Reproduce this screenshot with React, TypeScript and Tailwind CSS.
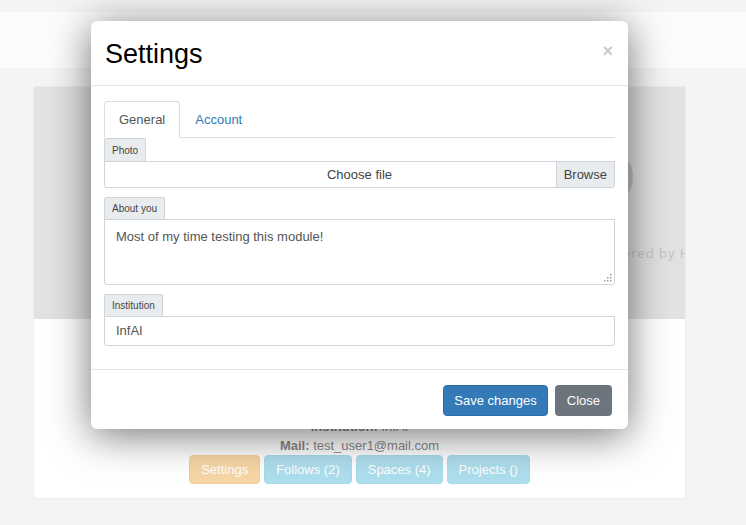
import React from "react";

export default function App() {
  const font = { fontFamily: '"Liberation Sans", Arial, sans-serif' };
  return (
    <div className="relative w-[746px] h-[525px] overflow-hidden bg-[#f4f4f4]" style={font}>
      {/* top bar */}
      <div className="mt-[12px] h-[56px] bg-[#fbfcfc]" />
      {/* card */}
      <div className="ml-[33px] mt-[18px] w-[653px] h-[413px] border border-[#ececec] bg-white flex flex-col overflow-hidden">
        <div className="h-[232px] bg-[#e2e2e2] flex flex-col whitespace-nowrap overflow-hidden">
          <div className="ml-[573px] mt-[66px] text-[50px] leading-[50px] text-[#c2c2c2]">0</div>
          <div
            className="ml-[560px] mt-[41px] text-[13px] tracking-[1px] text-[#c2c2c2]"
            style={{ fontFamily: '"Open Sans", sans-serif' }}
          >
            Powered by HTML5 UP
          </div>
        </div>
        <div className="flex-1 flex flex-col items-center pt-[98px] text-[13px] text-[#888]">
          <div className="leading-[19px]">
            <b>Institution:</b> InfAI
          </div>
          <div className="leading-[19px]">
            <b>Mail:</b> test_user1@mail.com
          </div>
          <div className="flex gap-[4px]">
            <span className="h-[29px] px-[11px] flex items-center rounded-[4px] bg-[#f6d6a6] border border-[#f3cf9a] text-white">Settings</span>
            <span className="h-[29px] px-[11px] flex items-center rounded-[4px] bg-[#addeed] border border-[#a6dbec] text-white">Follows (2)</span>
            <span className="h-[29px] px-[11px] flex items-center rounded-[4px] bg-[#addeed] border border-[#a6dbec] text-white">Spaces (4)</span>
            <span className="h-[29px] px-[11px] flex items-center rounded-[4px] bg-[#addeed] border border-[#a6dbec] text-white">Projects ()</span>
          </div>
        </div>
      </div>

      {/* modal */}
      <div className="absolute left-[91px] top-[21px] w-[537px] h-[408px] bg-white rounded-[6px] shadow-[0_6px_40px_rgba(0,0,0,0.55)] flex flex-col">
        <div className="h-[65px] border-b border-[#e5e5e5] flex items-center justify-between pl-[14px] pr-[15px]">
          <h2 className="text-[27px] text-black leading-none mt-[2px]">Settings</h2>
          <span className="text-[18px] font-bold text-[#c8cbce] leading-none mt-[-4px]">×</span>
        </div>
        <div className="px-[13px] pt-[15px] flex flex-col">
          {/* tabs */}
          <div className="flex border-b border-[#dddddd] h-[37px]">
            <div className="h-[37px] px-[14px] flex items-center border border-[#dddddd] border-b-white rounded-t-[4px] bg-white text-[13px] text-[#555]">
              General
            </div>
            <div className="h-[37px] px-[15px] flex items-center text-[13px] text-[#337ab7]">Account</div>
          </div>
          {/* Photo */}
          <div className="flex">
            <span className="h-[23px] px-[7px] flex items-center bg-[#e9ecef] border border-[#ced4da] border-b-0 rounded-t-[2px] text-[10px] text-[#444]">Photo</span>
          </div>
          <div className="relative h-[27px] border border-[#ced4da] rounded-b-[3px] flex items-center justify-center text-[13px] text-[#444]">
            Choose file
            <span className="absolute right-0 top-0 h-full px-[7px] flex items-center bg-[#e9ecef] border-l border-[#ced4da] rounded-br-[3px]">Browse</span>
          </div>
          {/* About */}
          <div className="flex mt-[9px]">
            <span className="h-[22px] px-[7px] flex items-center bg-[#e9ecef] border border-[#ced4da] border-b-0 rounded-t-[2px] text-[10px] text-[#444]">About you</span>
          </div>
          <div className="relative h-[66px] border border-[#ced4da] rounded-b-[3px] px-[11px] pt-[7px] text-[13px] text-[#555]">
            Most of my time testing this module!
            <svg className="absolute right-[2px] bottom-[2px]" width="8" height="8" viewBox="0 0 8 8">
              <rect x="6" y="0" width="1.5" height="1.5" fill="#999" />
              <rect x="3" y="3" width="1.5" height="1.5" fill="#999" />
              <rect x="6" y="3" width="1.5" height="1.5" fill="#999" />
              <rect x="0" y="6" width="1.5" height="1.5" fill="#999" />
              <rect x="3" y="6" width="1.5" height="1.5" fill="#999" />
              <rect x="6" y="6" width="1.5" height="1.5" fill="#999" />
            </svg>
          </div>
          {/* Institution */}
          <div className="flex mt-[9px]">
            <span className="h-[22px] px-[7px] flex items-center bg-[#e9ecef] border border-[#ced4da] border-b-0 rounded-t-[2px] text-[10px] text-[#444]">Institution</span>
          </div>
          <div className="h-[30px] border border-[#ced4da] rounded-b-[3px] px-[11px] flex items-center text-[13px] text-[#555]">
            InfAI
          </div>
        </div>
        <div className="mt-[23px] border-t border-[#e5e5e5] flex-1 flex justify-end items-start pt-[15px] pr-[16px] gap-[7px]">
          <button className="h-[31px] px-[10px] rounded-[4px] bg-[#337ab7] border border-[#2e6da4] text-white text-[13px]">Save changes</button>
          <button className="h-[31px] px-[12px] rounded-[4px] bg-[#6c757d] text-white text-[13px]">Close</button>
        </div>
      </div>
    </div>
  );
}
